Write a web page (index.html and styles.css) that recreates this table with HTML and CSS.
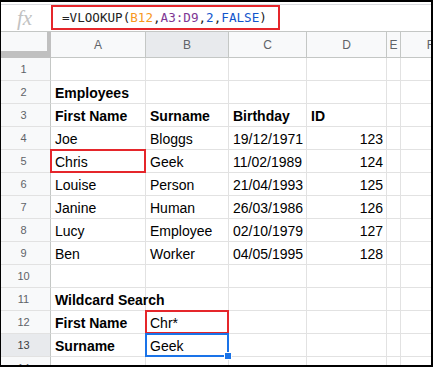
FILE: index.html
```html
<!DOCTYPE html>
<html>
<head>
<meta charset="utf-8">
<link rel="stylesheet" href="styles.css">
</head>
<body>
<div class="frame">
  <div class="topgap"></div>
  <div class="fbar">
    <div class="fx">fx</div>
    <div class="formula"><span class="k">=VLOOKUP(</span><span class="ref1">B12</span><span class="k">,</span><span class="ref2">A3:D9</span><span class="k">,</span><span class="num">2</span><span class="k">,</span><span class="num">FALSE</span><span class="k">)</span></div>
  </div>
  <div class="sheet">
    <div class="corner"></div>
    <div class="ch">A</div><div class="ch sel">B</div><div class="ch">C</div><div class="ch">D</div><div class="ch">E</div><div class="ch">F</div>

    <div class="rh">1</div><div class="c"></div><div class="c"></div><div class="c"></div><div class="c"></div><div class="c"></div><div class="c"></div>
    <div class="rh">2</div><div class="c b">Employees</div><div class="c"></div><div class="c"></div><div class="c"></div><div class="c"></div><div class="c"></div>
    <div class="rh">3</div><div class="c b">First Name</div><div class="c b">Surname</div><div class="c b">Birthday</div><div class="c b">ID</div><div class="c"></div><div class="c"></div>
    <div class="rh">4</div><div class="c">Joe</div><div class="c">Bloggs</div><div class="c">19/12/1971</div><div class="c r">123</div><div class="c"></div><div class="c"></div>
    <div class="rh">5</div><div class="c red">Chris</div><div class="c">Geek</div><div class="c">11/02/1989</div><div class="c r">124</div><div class="c"></div><div class="c"></div>
    <div class="rh">6</div><div class="c">Louise</div><div class="c">Person</div><div class="c">21/04/1993</div><div class="c r">125</div><div class="c"></div><div class="c"></div>
    <div class="rh">7</div><div class="c">Janine</div><div class="c">Human</div><div class="c">26/03/1986</div><div class="c r">126</div><div class="c"></div><div class="c"></div>
    <div class="rh">8</div><div class="c">Lucy</div><div class="c">Employee</div><div class="c">02/10/1979</div><div class="c r">127</div><div class="c"></div><div class="c"></div>
    <div class="rh">9</div><div class="c">Ben</div><div class="c">Worker</div><div class="c">04/05/1995</div><div class="c r">128</div><div class="c"></div><div class="c"></div>
    <div class="rh">10</div><div class="c"></div><div class="c"></div><div class="c"></div><div class="c"></div><div class="c"></div><div class="c"></div>
    <div class="rh">11</div><div class="c b">Wildcard Search</div><div class="c"></div><div class="c"></div><div class="c"></div><div class="c"></div><div class="c"></div>
    <div class="rh">12</div><div class="c b">First Name</div><div class="c red">Chr*</div><div class="c"></div><div class="c"></div><div class="c"></div><div class="c"></div>
    <div class="rh sel">13</div><div class="c b">Surname</div><div class="c active">Geek<span class="handle"></span></div><div class="c"></div><div class="c"></div><div class="c"></div><div class="c"></div>
    <div class="rh">14</div><div class="c"></div><div class="c"></div><div class="c"></div><div class="c"></div><div class="c"></div><div class="c"></div>
  </div>
</div>
</body>
</html>
```
FILE: styles.css
```css
html, body {
  margin: 0;
  padding: 0;
  background: #fff;
}
.frame {
  width: 433px;
  height: 367px;
  box-sizing: border-box;
  border-style: solid;
  border-color: #000;
  border-width: 2px 2px 2px 1px;
  overflow: hidden;
  background: #fff;
  font-family: "Liberation Sans", Arial, sans-serif;
}
.topgap {
  height: 2px;
  border-bottom: 1px solid #dadce0;
}
.fbar {
  height: 26px;
  border-bottom: 1px solid #c4c7c5;
  display: flex;
  align-items: flex-start;
}
.fx {
  width: 50px;
  height: 26px;
  display: flex;
  align-items: center;
  justify-content: center;
  font-family: "Liberation Serif", "Times New Roman", serif;
  font-style: italic;
  font-size: 21px;
  color: #c2c2c2;
  padding-right: 3px;
  box-sizing: border-box;
}
.formula {
  width: 229px;
  height: 25px;
  box-sizing: border-box;
  border: 2px solid #e5262b;
  padding-left: 9px;
  font-family: "DejaVu Sans Mono", "Liberation Mono", monospace;
  font-size: 12.6px;
  line-height: 21px;
  color: #222;
  white-space: nowrap;
}
.ref1 { color: #f7981d; }
.ref2 { color: #7e3794; }
.num { color: #1155cc; }

.sheet {
  display: grid;
  width: 460px;
  grid-template-columns: 50px 95px 83px 78px 80px 14px 60px;
  grid-auto-rows: 23px;
  grid-template-rows: 26px;
}
.corner {
  background: #f8f9fa;
  box-sizing: border-box;
  border-right: 4px solid #c0c0c0;
  border-bottom: 7px solid #c0c0c0;
}
.ch {
  background: #f8f9fa;
  box-sizing: border-box;
  border-right: 1px solid #c4c7c5;
  border-bottom: 1px solid #c4c7c5;
  display: flex;
  align-items: center;
  justify-content: center;
  font-size: 12px;
  color: #5f6368;
}
.ch.sel { background: #e8eaed; }
.rh {
  background: #f8f9fa;
  box-sizing: border-box;
  border-right: 1px solid #c4c7c5;
  border-bottom: 1px solid #e2e2e2;
  display: flex;
  align-items: center;
  justify-content: center;
  padding-right: 4px;
  font-size: 11px;
  color: #5f6368;
}
.rh.sel { background: #e8eaed; color: #3c4043; }
.c {
  position: relative;
  box-sizing: border-box;
  border-right: 1px solid #e2e2e2;
  border-bottom: 1px solid #e2e2e2;
  display: flex;
  align-items: flex-end;
  padding: 0 3px 2px 4px;
  font-size: 14px;
  line-height: 16px;
  color: #000;
  white-space: nowrap;
}
.c.b { font-weight: bold; }
.c.r { justify-content: flex-end; }
.c.red::after,
.c.active::after {
  content: "";
  position: absolute;
  top: -1px;
  left: -1px;
  right: -1px;
  bottom: -1px;
  border: 2px solid #e5262b;
  pointer-events: none;
}
.c.active::after { border-color: #1a73e8; }
.handle {
  position: absolute;
  right: -4px;
  bottom: -4px;
  width: 6px;
  height: 6px;
  background: #1a73e8;
  border: 1px solid #fff;
  z-index: 2;
}
```
